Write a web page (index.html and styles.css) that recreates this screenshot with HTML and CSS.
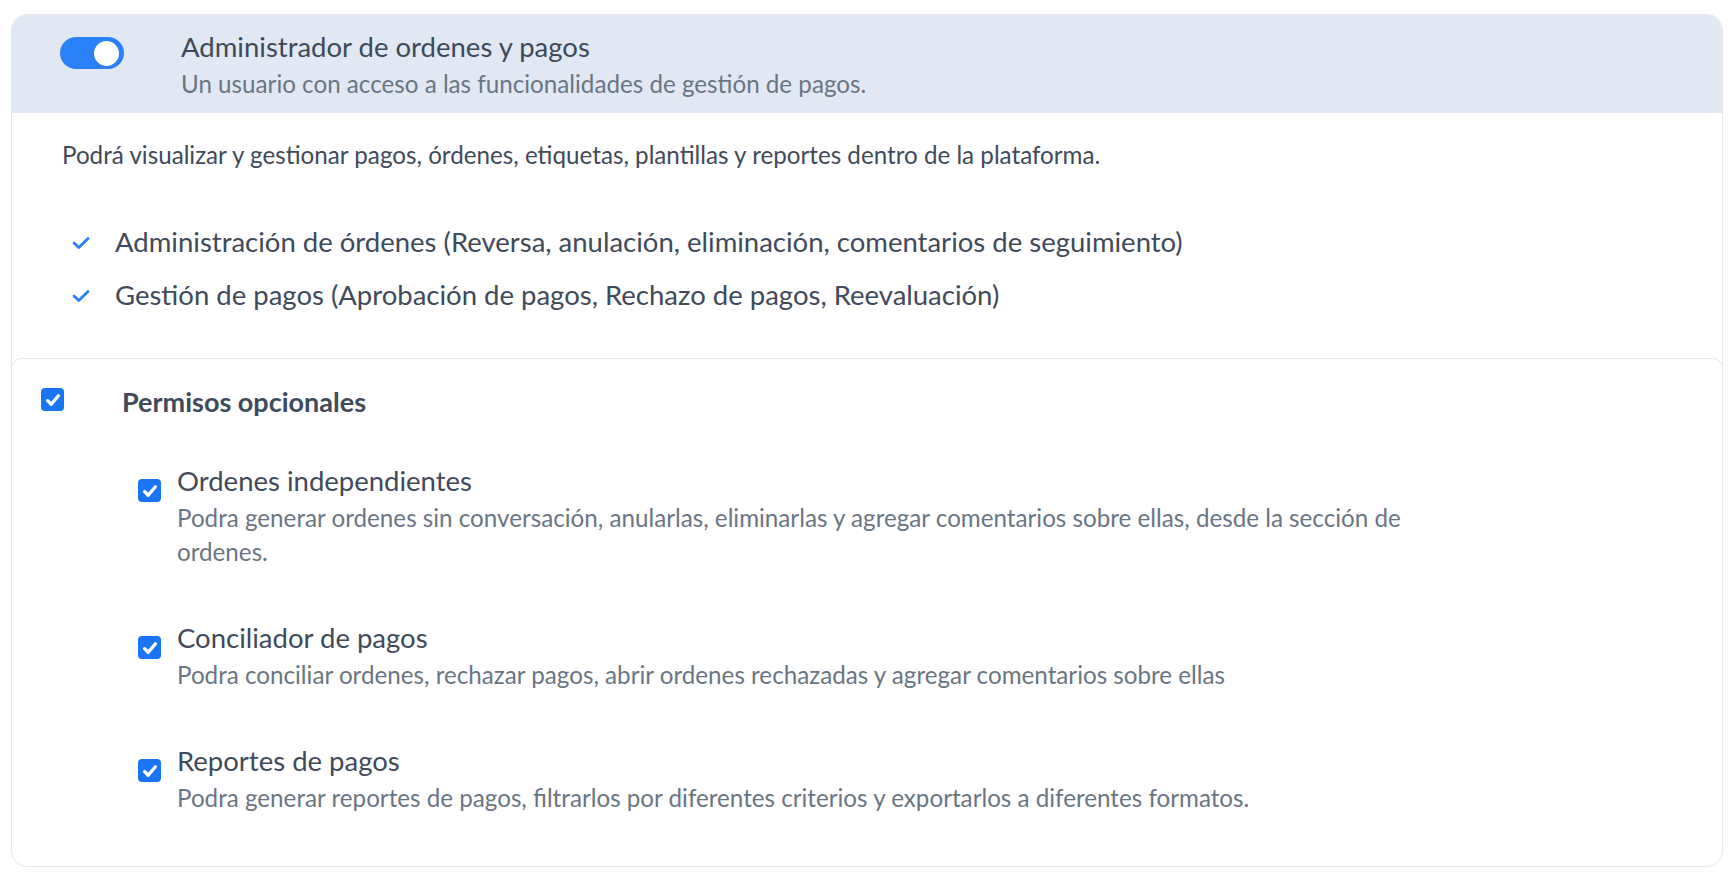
FILE: index.html
```html
<!DOCTYPE html>
<html lang="es">
<head>
    <meta charset="UTF-8">
    <title>Roles</title>
    <link rel="stylesheet" href="styles.css">
</head>
<body>
    <div class="card">
        <div class="role-head">
            <span class="toggle"><span class="knob"></span></span>
            <div class="role-text">
                <h2 class="role-title">Administrador de ordenes y pagos</h2>
                <p class="role-sub">Un usuario con acceso a las funcionalidades de gestión de pagos.</p>
            </div>
        </div>

        <div class="role-body">
            <p class="role-desc">Podrá visualizar y gestionar pagos, órdenes, etiquetas, plantillas y reportes dentro de la plataforma.</p>
            <ul class="perm-list">
                <li>
                    <svg class="tick" viewBox="0 0 18 14"><path d="M2 7l4.8 4.6L16 2.4"/></svg>
                    <span>Administración de órdenes (Reversa, anulación, eliminación, comentarios de seguimiento)</span>
                </li>
                <li>
                    <svg class="tick" viewBox="0 0 18 14"><path d="M2 7l4.8 4.6L16 2.4"/></svg>
                    <span>Gestión de pagos (Aprobación de pagos, Rechazo de pagos, Reevaluación)</span>
                </li>
            </ul>
        </div>

        <div class="optional">
            <div class="optional-head">
                <span class="cb"><svg viewBox="0 0 16 16"><path d="M3.2 8.6l3.2 3.2 6.4-7.6"/></svg></span>
                <h3 class="optional-title">Permisos opcionales</h3>
            </div>

            <div class="opt-item">
                <span class="cb"><svg viewBox="0 0 16 16"><path d="M3.2 8.6l3.2 3.2 6.4-7.6"/></svg></span>
                <div class="opt-text">
                    <div class="opt-title">Ordenes independientes</div>
                    <p class="opt-desc">Podra generar ordenes sin conversación, anularlas, eliminarlas y agregar comentarios sobre ellas, desde la sección de ordenes.</p>
                </div>
            </div>

            <div class="opt-item">
                <span class="cb"><svg viewBox="0 0 16 16"><path d="M3.2 8.6l3.2 3.2 6.4-7.6"/></svg></span>
                <div class="opt-text">
                    <div class="opt-title">Conciliador de pagos</div>
                    <p class="opt-desc">Podra conciliar ordenes, rechazar pagos, abrir ordenes rechazadas y agregar comentarios sobre ellas</p>
                </div>
            </div>

            <div class="opt-item">
                <span class="cb"><svg viewBox="0 0 16 16"><path d="M3.2 8.6l3.2 3.2 6.4-7.6"/></svg></span>
                <div class="opt-text">
                    <div class="opt-title">Reportes de pagos</div>
                    <p class="opt-desc">Podra generar reportes de pagos, filtrarlos por diferentes criterios y exportarlos a diferentes formatos.</p>
                </div>
            </div>
        </div>
    </div>
</body>
</html>
```

FILE: styles.css
```css
* {
    margin: 0;
    padding: 0;
    box-sizing: border-box;
}

body {
    font-family: 'Lato', 'Open Sans', sans-serif;
    background: #fff;
    padding: 14px 11px;
    color: #3f4a5a;
}

.card {
    border: 1px solid #e4e7eb;
    border-radius: 16px;
    overflow: hidden;
    background: #fff;
}

/* role header */
.role-head {
    display: flex;
    align-items: flex-start;
    height: 98px;
    padding: 14px 0 0 48px;
    background: #e1e8f4;
}

.toggle {
    width: 64px;
    height: 32px;
    margin-top: 8px;
    border-radius: 16px;
    background: #2a80f8;
    display: flex;
    align-items: center;
    justify-content: flex-end;
    padding-right: 5px;
    flex-shrink: 0;
}

.knob {
    width: 25px;
    height: 25px;
    border-radius: 50%;
    background: #fff;
}

.role-text {
    margin-left: 57px;
}

.role-title {
    font-size: 27.5px;
    font-weight: 400;
    line-height: 36px;
    color: #3e4a59;
}

.role-sub {
    font-size: 24.2px;
    line-height: 38px;
    color: #6a7583;
}

/* role body */
.role-body {
    padding: 27px 0 37px 50px;
}

.role-desc {
    font-size: 24.2px;
    line-height: 30px;
    color: #3f4a5a;
}

.perm-list {
    list-style: none;
    margin-top: 45px;
    padding-left: 10px;
}

.perm-list li {
    display: flex;
    align-items: center;
    height: 53px;
    font-size: 27.5px;
    color: #3f4a5a;
}

.tick {
    width: 18px;
    height: 14px;
    margin: 3px 25px 0 0;
    fill: none;
    stroke: #2a80f8;
    stroke-width: 2.8;
    stroke-linecap: round;
    stroke-linejoin: round;
    flex-shrink: 0;
}

/* optional permissions */
.optional {
    border: 1px solid #e6e8eb;
    border-bottom: 0;
    border-radius: 10px 10px 0 0;
    padding: 26px 0 51px 29px;
    margin: 0 -1px;
}

.optional-head {
    display: flex;
    align-items: flex-start;
}

.optional-head .cb {
    margin-top: 3px;
}

.optional-title {
    font-size: 27px;
    font-weight: 700;
    line-height: 34px;
    margin-left: 58px;
    color: #3f4a5a;
}

.cb {
    width: 23px;
    height: 23px;
    border-radius: 4px;
    background: #1a75f5;
    display: flex;
    align-items: center;
    justify-content: center;
    flex-shrink: 0;
}

.cb svg {
    width: 18px;
    height: 18px;
    fill: none;
    stroke: #fff;
    stroke-width: 3;
    stroke-linecap: round;
    stroke-linejoin: round;
}

.opt-item {
    display: flex;
    align-items: flex-start;
    padding-left: 97px;
    margin-top: 52px;
}

.optional-head + .opt-item {
    margin-top: 45px;
}

.opt-item .cb {
    margin-top: 15px;
}

.opt-text {
    margin-left: 16px;
    max-width: 1260px;
}

.opt-title {
    font-size: 27.5px;
    line-height: 34px;
    color: #3f4a5a;
}

.opt-desc {
    font-size: 24.2px;
    line-height: 34px;
    margin-top: 3px;
    color: #6a7583;
}
```
